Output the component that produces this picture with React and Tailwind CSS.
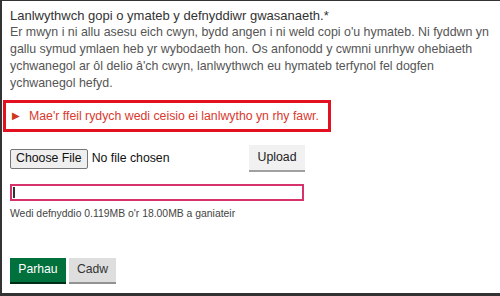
export default function App() {
  return (
    <div
      className="w-[500px] h-[296px] bg-white border-l-2 border-t border-b-[3px] border-[#333] overflow-hidden"
      style={{ fontFamily: '"Liberation Sans", Arial, sans-serif' }}
    >
      <div className="pl-[8px] pt-[6px] whitespace-nowrap">
        <p className="text-[13px] leading-[17px] text-[#333]">
          Lanlwythwch gopi o ymateb y defnyddiwr gwasanaeth.*
        </p>
        <p className="text-[12.4px] leading-[17px] text-[#555]">
          Er mwyn i ni allu asesu eich cwyn, bydd angen i ni weld copi o'u hymateb. Ni fyddwn yn
          <br />
          gallu symud ymlaen heb yr wybodaeth hon. Os anfonodd y cwmni unrhyw ohebiaeth
          <br />
          ychwanegol ar ôl delio â'ch cwyn, lanlwythwch eu hymateb terfynol fel dogfen
          <br />
          ychwanegol hefyd.
        </p>
      </div>
      <div className="ml-px mt-[8px] w-[328px] h-[32px] border-[3px] border-[#e3101f] flex items-center pl-[6px] gap-[9px] whitespace-nowrap">
        <span className="text-[10px] text-[#d4351c] leading-none">▶</span>
        <span className="text-[12.3px] text-[#d9392e]">Mae'r ffeil rydych wedi ceisio ei lanlwytho yn rhy fawr.</span>
      </div>
      <div className="pl-[8px] mt-[13px] w-[303px] flex items-center justify-between">
        <div className="flex items-center">
          <span className="h-[20px] px-[5px] flex items-center border border-[#767676] rounded-[2px] bg-[#efefef] text-[12.3px] text-[#111]">Choose File</span>
          <span className="ml-[4px] text-[12.3px] text-[#111]">No file chosen</span>
        </div>
        <span className="h-[27px] w-[56px] flex items-center justify-center bg-[#f1f1f1] border-b-2 border-[#a0a0a0] text-[12.3px] text-[#222]">Upload</span>
      </div>
      <div className="ml-[8px] mt-[12px] w-[294px] h-[17px] border-2 border-[#d6336c] p-[1px]">
        <div className="h-full bg-[#333]" style={{ width: `${(0.119 / 18) * 100}%` }}></div>
      </div>
      <p className="pl-[8px] mt-[5px] text-[10.4px] text-[#444]">Wedi defnyddio 0.119MB o'r 18.00MB a ganiateir</p>
      <div className="pl-[8px] mt-[36px] flex gap-[3px]">
        <span className="h-[26px] w-[56px] flex items-center justify-center bg-[#00703c] text-white text-[12.2px] border-b-2 border-[#002d18]">Parhau</span>
        <span className="h-[26px] w-[47px] flex items-center justify-center bg-[#dedede] text-[#333] text-[12.2px] border-b-2 border-[#929292]">Cadw</span>
      </div>
    </div>
  );
}
